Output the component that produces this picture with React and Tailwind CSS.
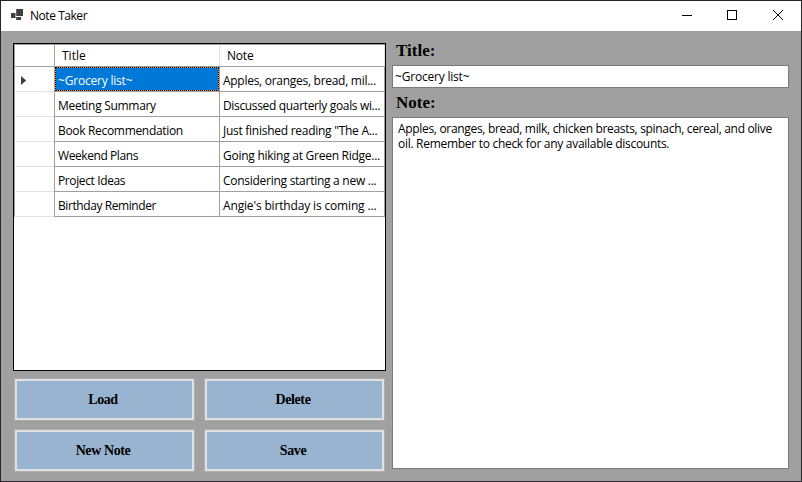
const notes = [
  { title: "~Grocery list~", note: "Apples, oranges, bread, mil...", t: "tracking-[-0.2px]", n: "tracking-[-0.28px]" },
  { title: "Meeting Summary", note: "Discussed quarterly goals wi...", t: "tracking-[-0.3px]", n: "tracking-[-0.34px]" },
  { title: "Book Recommendation", note: "Just finished reading \"The A...", t: "tracking-[-0.32px]", n: "tracking-[-0.27px]" },
  { title: "Weekend Plans", note: "Going hiking at Green Ridge...", t: "tracking-[-0.42px]", n: "tracking-[-0.26px]" },
  { title: "Project Ideas", note: "Considering starting a new ...", t: "tracking-[-0.38px]", n: "tracking-[-0.27px]" },
  { title: "Birthday Reminder", note: "Angie's birthday is coming ...", t: "tracking-[-0.42px]", n: "tracking-[-0.16px]" },
];

function TitleBar() {
  return (
    <header className="flex h-[30px] shrink-0 items-center bg-white pl-[10px]">
      <svg width="12" height="12" viewBox="0 0 12 12" className="mt-[-2px] shrink-0" fill="#3f3f3f">
        <path d="M5.200 0H12v7H5.200z" />
        <path d="M0 4h4.500v5H0z" />
        <path d="M5.200 8H10v3H5.200z" />
      </svg>
      <span className="ml-[7px] flex-1 pb-px tracking-[-0.45px] text-black">Note Taker</span>
      <svg width="137" height="30" viewBox="0 0 137 30" fill="none" stroke="#000">
        <path d="M18 14.500h10" shapeRendering="crispEdges" />
        <path d="M63.500 9.500h9v9h-9z" shapeRendering="crispEdges" />
        <path d="M109 9l10 10M119 9l-10 10" />
      </svg>
    </header>
  );
}

function NotesGrid() {
  return (
    <div className="h-[328px] w-[373px] border border-black bg-white">
      <div className="w-[371px] border-l border-t border-[#a0a0a0]">
        <div className="flex h-[22px] border-b border-[#a0a0a0]">
          <div className="w-[40px] border-r border-[#a0a0a0]" />
          <div className="flex w-[165px] items-center border-r border-[#e2e2e2] pl-[7px]">Title</div>
          <div className="flex w-[165px] items-center border-r border-[#e2e2e2] pl-[7px] tracking-[-0.2px]">Note</div>
        </div>
        {notes.map((row, i) => (
          <div key={row.title} className="flex h-[25px]">
            <div className="flex w-[40px] border-r border-[#a0a0a0] pl-px">
              <div className="flex flex-1 items-center border-b border-[#e2e2e2] pl-[5px]">
                {i === 0 && (
                  <svg width="6" height="10" viewBox="0 0 6 10" fill="#404040" className="mt-1">
                    <path d="M0 0L5.200 4.500L0 9z" />
                  </svg>
                )}
              </div>
            </div>
            <div className="w-[165px] border-b border-r border-[#a0a0a0]">
              {i === 0 ? (
                <div className="h-full border border-dotted border-black bg-[#ff8728]">
                  <div className="flex h-full items-center bg-[#0078d7] pt-[2px] pl-[2px] text-white">
                    <span className={row.t}>{row.title}</span>
                  </div>
                </div>
              ) : (
                <div className="flex h-full items-center pt-[2px] pl-[3px]">
                  <span className={row.t}>{row.title}</span>
                </div>
              )}
            </div>
            <div className="flex w-[165px] items-center border-b border-r border-[#a0a0a0] pt-[2px] pl-[3px]">
              <span className={row.n}>{row.note}</span>
            </div>
          </div>
        ))}
      </div>
    </div>
  );
}

function ActionButton({ children }) {
  return (
    <button className="h-[43px] w-[181px] border border-[#adadad] bg-[#e1e1e1] p-[2px] font-['Liberation_Serif',serif] text-[14px] font-bold tracking-[-0.4px] text-black">
      <span className="flex h-full items-center justify-center bg-[#99b4d1] pr-[3px]">{children}</span>
    </button>
  );
}

export default function App() {
  return (
    <div className="flex h-[482px] w-[802px] flex-col overflow-hidden border border-[#272527] bg-[#a0a0a0] font-['Open_Sans','Noto_Sans',sans-serif] text-[12px] leading-[15px] whitespace-nowrap text-black">
      <TitleBar />
      <main className="flex flex-1 pt-3 pl-3">
        <section className="w-[379px]">
          <NotesGrid />
          <div className="mt-[7px] ml-px grid w-[371px] grid-cols-2 gap-x-[9px] gap-y-2">
            <ActionButton>Load</ActionButton>
            <ActionButton>Delete</ActionButton>
            <ActionButton>New Note</ActionButton>
            <ActionButton>Save</ActionButton>
          </div>
        </section>
        <section className="w-[397px]">
          <div className="h-[22px] pl-1 font-['Liberation_Serif',serif] text-[17px] leading-[16px] font-bold">Title:</div>
          <div className="flex h-[23px] items-center border border-[#7a7a7a] bg-white pl-[2px] tracking-[-0.2px]">~Grocery list~</div>
          <div className="h-[29px] pt-[7px] pl-1 font-['Liberation_Serif',serif] text-[17px] leading-[16px] font-bold">Note:</div>
          <div className="h-[352px] border border-[#7a7a7a] bg-white pt-[3px] pl-[5px]">
            <p className="tracking-[-0.32px]">Apples, oranges, bread, milk, chicken breasts, spinach, cereal, and olive</p>
            <p className="tracking-[-0.29px]">oil. Remember to check for any available discounts.</p>
          </div>
        </section>
      </main>
    </div>
  );
}
